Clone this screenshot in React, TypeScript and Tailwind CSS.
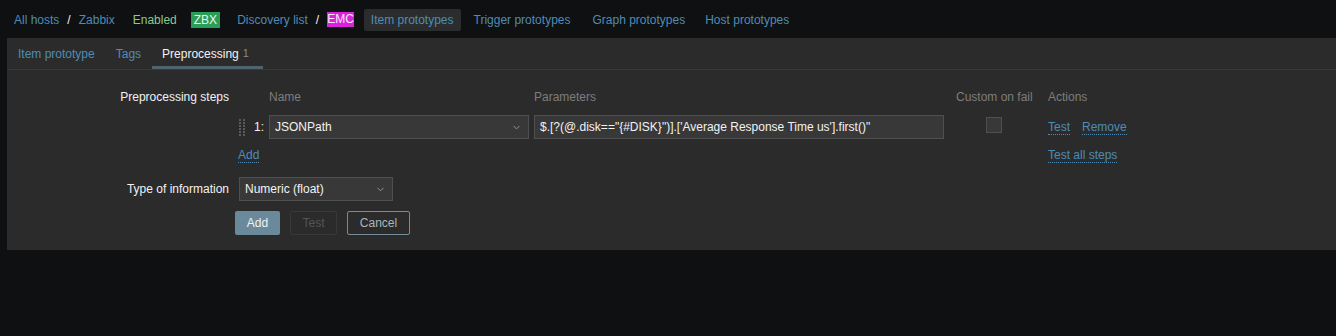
import { ChevronDown } from "lucide-react";

const font = "font-['Liberation_Sans',Arial,sans-serif]";

function DragHandle() {
  return (
    <svg width="8" height="18" viewBox="0 0 8 18" className="block">
      {[0, 1, 2, 3, 4, 5].map((r) =>
        [0, 1].map((c) => (
          <rect key={`${r}-${c}`} x={1 + c * 4} y={1 + r * 3} width="2" height="2" fill="#5a5a5a" />
        ))
      )}
    </svg>
  );
}

function Select({ value, className }: { value: string; className: string }) {
  return (
    <div
      className={`flex items-center justify-between h-[24px] bg-[#383838] border border-[#4f4f4f] pl-[5px] pr-[6px] text-[#f2f2f2] ${className}`}
    >
      <span>{value}</span>
      <ChevronDown className="w-[11px] h-[11px] text-[#9a9a9a]" strokeWidth={2} />
    </div>
  );
}

function DotLink({ children }: { children: string }) {
  return (
    <span className="text-[#4f8cb5] border-b border-dotted border-[#4f8cb5] leading-[14px]">{children}</span>
  );
}

export default function App() {
  return (
    <div className={`w-[1336px] h-[336px] bg-[#0e1012] text-[12px] ${font} overflow-hidden`}>
      {/* breadcrumbs / navigation */}
      <div className="h-[38px] pt-[1px] flex items-center pl-[14px] text-[#4f8cb5]">
        <span>All hosts</span>
        <span className="mx-[8px] text-[#f2f2f2]">/</span>
        <span>Zabbix</span>
        <span className="ml-[18px] text-[#8cc98c]">Enabled</span>
        <span className="ml-[14px] px-[3px] h-[16px] leading-[16px] bg-[#2a9d56] text-[#e8f5ec]">ZBX</span>
        <span className="ml-[17px]">Discovery list</span>
        <span className="mx-[8px] text-[#f2f2f2]">/</span>
        <span className="h-[15px] leading-[15px] bg-[#d922d9] text-[#fbe8fb]">EMC</span>
        <span className="ml-[10px] h-[22px] leading-[22px] px-[7px] bg-[#2b2c2e] rounded-[2px]">Item prototypes</span>
        <span className="ml-[13px]">Trigger prototypes</span>
        <span className="ml-[22px]">Graph prototypes</span>
        <span className="ml-[20px]">Host prototypes</span>
      </div>

      {/* panel */}
      <div className="ml-[7px] h-[212px] bg-[#2b2b2b]">
        <div className="h-[32px] flex border-b border-[#383838]">
          <div className="px-[11px] flex items-center text-[#4f8cb5]">Item prototype</div>
          <div className="px-[9px] ml-[1px] flex items-center text-[#4f8cb5]">Tags</div>
          <div className="ml-[2px] pl-[10px] pr-[14px] flex items-center text-[#f2f2f2] border-b-[3px] border-[#4f6270] pt-[3px]">
            Preprocessing<span className="ml-[4px] text-[#8a8a8a] text-[11px]">1</span>
          </div>
        </div>

        <div className="pt-[18px] text-[#f2f2f2]">
          <div className="flex">
            <div className="w-[222px] text-right h-[18px] leading-[18px]">Preprocessing steps</div>
            <div className="ml-[9px]">
              <div className="grid grid-cols-[31px_265px_422px_92px_auto] text-[#7d7d7d] h-[18px] leading-[18px]">
                <div></div>
                <div>Name</div>
                <div>Parameters</div>
                <div>Custom on fail</div>
                <div>Actions</div>
              </div>
              <div className="grid grid-cols-[31px_265px_422px_92px_auto] items-center mt-[9px] h-[24px]">
                <div className="flex items-center">
                  <DragHandle />
                  <span className="ml-[8px]">1:</span>
                </div>
                <Select value="JSONPath" className="w-[260px]" />
                <div className="w-[410px] h-[24px] bg-[#383838] border border-[#4f4f4f] px-[5px] leading-[22px]">
                  $.[?(@.disk=="{"{"}#DISK{"}"}")].['Average Response Time us'].first()"
                </div>
                <div className="pl-[30px] mb-[4px]">
                  <div className="w-[16px] h-[16px] bg-[#383838] border border-[#505050]"></div>
                </div>
                <div className="flex gap-[12px]">
                  <DotLink>Test</DotLink>
                  <DotLink>Remove</DotLink>
                </div>
              </div>
              <div className="grid grid-cols-[31px_265px_422px_92px_auto] mt-[7px] h-[16px]">
                <div className="col-span-4">
                  <DotLink>Add</DotLink>
                </div>
                <div>
                  <DotLink>Test all steps</DotLink>
                </div>
              </div>
            </div>
          </div>

          <div className="flex items-center mt-[15px]">
            <div className="w-[222px] text-right">Type of information</div>
            <Select value="Numeric (float)" className="ml-[10px] w-[154px]" />
          </div>

          <div className="flex mt-[10px] ml-[228px] gap-[10px]">
            <div className="w-[45px] h-[24px] leading-[24px] text-center bg-[#6a8a9c] rounded-[2px] text-[#f2f2f2]">Add</div>
            <div className="w-[47px] h-[24px] leading-[22px] text-center border border-[#383838] rounded-[2px] text-[#555555]">Test</div>
            <div className="w-[63px] h-[24px] leading-[22px] text-center border border-[#768d99] rounded-[2px] text-[#aab6bd]">Cancel</div>
          </div>
        </div>
      </div>
    </div>
  );
}
